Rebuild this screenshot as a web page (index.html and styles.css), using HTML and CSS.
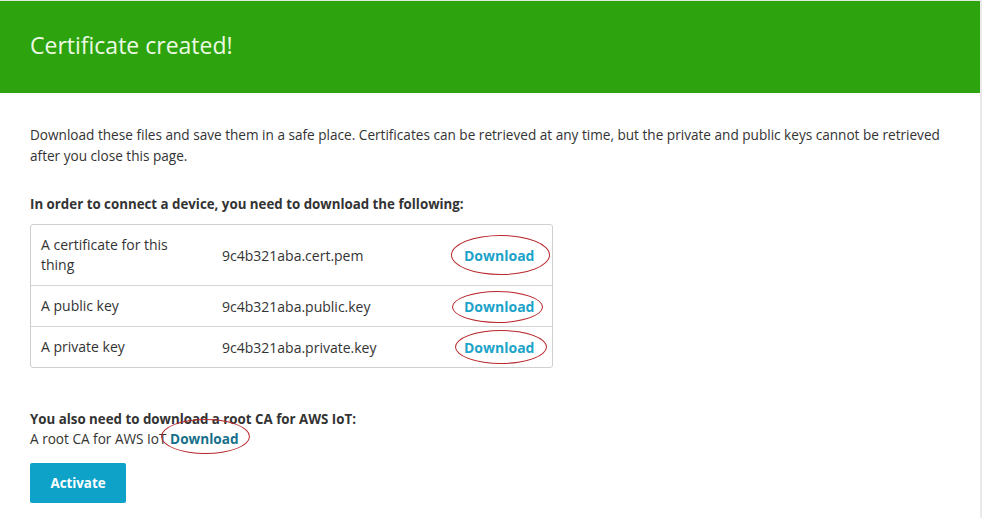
FILE: index.html
```html
<!DOCTYPE html>
<html lang="en">
<head>
    <meta charset="UTF-8">
    <title>Certificate created</title>
    <link rel="stylesheet" href="styles.css">
</head>
<body>
    <div class="page">
        <div class="banner">
            <h1>Certificate created!</h1>
        </div>

        <div class="content">
            <p class="intro">Download these files and save them in a safe place. Certificates can be retrieved at any time, but the private and public keys cannot be retrieved after you close this page.</p>

            <h2>In order to connect a device, you need to download the following:</h2>

            <div class="files">
                <div class="file-row tall">
                    <div class="file-label">A certificate for this thing</div>
                    <div class="file-name">9c4b321aba.cert.pem</div>
                    <div class="file-action"><a href="#" class="dl circled c1">Download</a></div>
                </div>
                <div class="file-row">
                    <div class="file-label">A public key</div>
                    <div class="file-name">9c4b321aba.public.key</div>
                    <div class="file-action"><a href="#" class="dl circled c2">Download</a></div>
                </div>
                <div class="file-row">
                    <div class="file-label">A private key</div>
                    <div class="file-name">9c4b321aba.private.key</div>
                    <div class="file-action"><a href="#" class="dl circled c3">Download</a></div>
                </div>
            </div>

            <h2 class="root-title">You also need to download a root CA for AWS IoT:</h2>
            <div class="root-line">A root CA for AWS IoT <a href="#" class="dl dark circled c4">Download</a></div>

            <button class="activate">Activate</button>
        </div>
    </div>
</body>
</html>
```

FILE: styles.css
```css
body {
    margin: 0;
    background-color: #e9e9e9;
    font-family: "Open Sans", "Noto Sans", Arial, sans-serif;
    color: #333;
}

.page {
    width: 980px;
    height: 518px;
    background-color: white;
    overflow: hidden;
}

.banner {
    background-color: #2da40e;
    border-top: 1px solid #dfe9da;
    height: 92px;
    display: flex;
    align-items: center;
    padding-left: 30px;
}

.banner h1 {
    margin: 0 0 4px;
    font-size: 23px;
    font-weight: 500;
    color: #ecfae3;
}

.content {
    padding: 31px 30px 0;
}

.intro {
    margin: 0;
    font-size: 13.6px;
    line-height: 21px;
}

h2 {
    margin: 28px 0 0;
    font-size: 13.3px;
    font-weight: 700;
    line-height: 20px;
}

.files {
    width: 521px;
    margin-top: 10px;
    border: 1px solid #cfcfcf;
    border-radius: 3px;
}

.file-row {
    display: flex;
    align-items: center;
    height: 40px;
    border-top: 1px solid #d5d5d5;
    font-size: 14px;
}

.file-row:first-child {
    border-top: none;
}

.file-row.tall {
    height: 60px;
}

.file-label {
    width: 140px;
    padding-left: 10px;
    line-height: 20px;
}

.file-name {
    flex: 1;
    padding-left: 41px;
}

.file-action {
    width: 88px;
}

.dl {
    font-weight: 700;
    color: #1ba3c9;
    text-decoration: none;
}

.dl.dark {
    color: #17708a;
}

.circled {
    position: relative;
}

.circled::after {
    content: "";
    position: absolute;
    border: 1px solid #b8282c;
    border-radius: 50%;
}

.c1::after {
    left: -13px;
    top: -11px;
    width: 97px;
    height: 38px;
}

.c2::after {
    left: -12px;
    top: -6px;
    width: 89px;
    height: 30px;
}

.c3::after {
    left: -9px;
    top: -8px;
    width: 90px;
    height: 32px;
}

.c4::after {
    left: -9px;
    top: -10px;
    width: 87px;
    height: 33px;
}

.root-title {
    margin-top: 41px;
}

.root-line {
    font-size: 13.6px;
    line-height: 20px;
}

.activate {
    margin-top: 14px;
    width: 96px;
    height: 40px;
    background-color: #0ea2c9;
    border: none;
    border-radius: 2px;
    color: white;
    font-family: inherit;
    font-size: 13.3px;
    font-weight: 700;
}
```
